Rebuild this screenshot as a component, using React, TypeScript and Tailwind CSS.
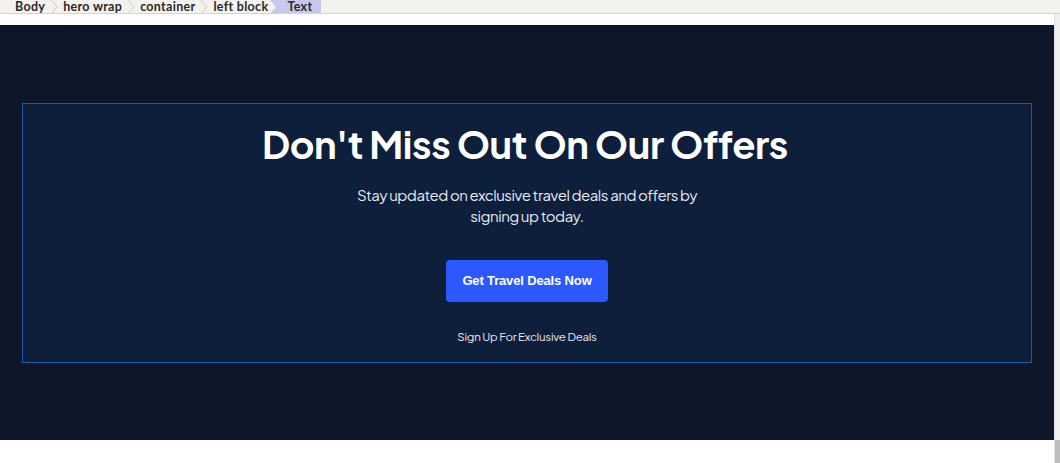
import React from "react";

const crumbs = ["Body", "hero wrap", "container"];

function Chevron() {
  return (
    <svg width="8" height="14" viewBox="0 0 8 14" className="shrink-0">
      <path d="M1 0 L7 7 L1 14" fill="none" stroke="#cfcdc8" strokeWidth="1" />
    </svg>
  );
}

export default function App() {
  return (
    <div className="w-[1060px] h-[463px] overflow-hidden bg-white flex flex-col" style={{ fontFamily: "Inter, 'Noto Sans', sans-serif" }}>
      <div className="h-[14px] shrink-0 bg-[#f3f2ef] border-b border-[#d6d4cf] flex items-stretch pl-[15px] text-[12.5px] leading-[14px] text-[#2a2a2a]" style={{ fontFamily: "Lato, 'Open Sans', sans-serif" }}>
        {crumbs.map((c) => (
          <div key={c} className="flex items-stretch">
            <span className="pr-[5px] font-bold tracking-[0.3px] whitespace-nowrap">{c}</span>
            <Chevron />
            <span className="w-[5px]" />
          </div>
        ))}
        <span className="pr-[2px] font-bold tracking-[0.3px] whitespace-nowrap">left block</span>
        <div className="flex items-stretch">
          <svg width="8" height="14" viewBox="0 0 8 14" className="shrink-0">
            <path d="M0 0 L8 0 L8 14 L0 14 L6 7 Z" fill="#c9c7ec" />
          </svg>
          <span className="bg-[#c9c7ec] pl-[9px] pr-[9px] font-bold tracking-[0.3px]">Text</span>
        </div>
      </div>
      <div className="flex flex-1 min-h-0">
        <div className="flex-1 flex flex-col">
          <div className="h-[11px] bg-white" />
          <section className="h-[415px] bg-[#0e1729] px-[22px] flex items-center">
            <div className="w-full h-[260px] bg-[#0e1f3c] border border-[#1f58b0] flex flex-col items-center pt-[17px] text-white" style={{ fontFamily: "'Plus Jakarta Sans', Inter, 'Noto Sans', sans-serif" }}>
              <h1 className="text-[38px] leading-[46px] font-bold tracking-[-0.4px] -translate-x-[2px]">Don't Miss Out On Our Offers</h1>
              <p className="mt-[17px] w-[380px] text-center text-[15px] leading-[21px] text-[#e6e9f0] tracking-[-0.45px]">
                Stay updated on exclusive travel deals and offers by signing up today.
              </p>
              <button className="mt-[34px] w-[162px] h-[42px] rounded-[4px] bg-[#2c59ff] text-white text-[13px] font-bold tracking-[-0.15px]" style={{ fontFamily: "'Liberation Sans', Arial, sans-serif" }}>
                Get Travel Deals Now
              </button>
              <p className="mt-[26px] text-[11.5px] leading-[18px] text-[#e6e9f0] tracking-[-0.25px]">Sign Up For Exclusive Deals</p>
            </div>
          </section>
          <div className="flex-1 bg-white" />
        </div>
        <div className="w-[6px] bg-[#efefef] border-l border-[#e2e2e2] flex flex-col">
          <div className="flex-1" />
          <div className="h-[23px] bg-[#bdbdbd]" />
        </div>
      </div>
    </div>
  );
}
